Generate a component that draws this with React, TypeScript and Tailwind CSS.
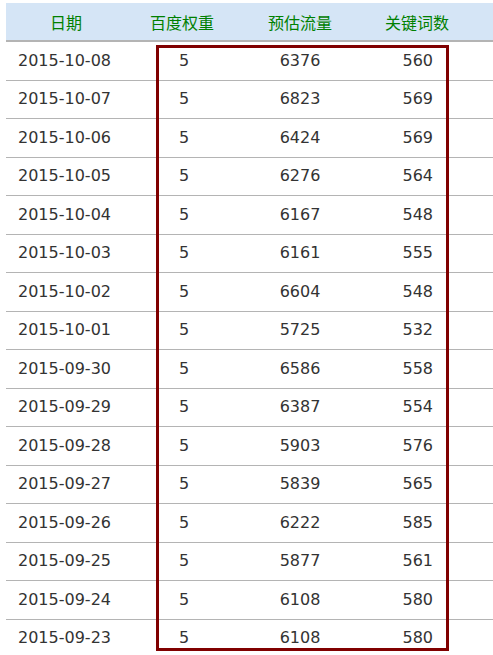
const rows = [
  ["2015-10-08", "5", "6376", "560"],
  ["2015-10-07", "5", "6823", "569"],
  ["2015-10-06", "5", "6424", "569"],
  ["2015-10-05", "5", "6276", "564"],
  ["2015-10-04", "5", "6167", "548"],
  ["2015-10-03", "5", "6161", "555"],
  ["2015-10-02", "5", "6604", "548"],
  ["2015-10-01", "5", "5725", "532"],
  ["2015-09-30", "5", "6586", "558"],
  ["2015-09-29", "5", "6387", "554"],
  ["2015-09-28", "5", "5903", "576"],
  ["2015-09-27", "5", "5839", "565"],
  ["2015-09-26", "5", "6222", "585"],
  ["2015-09-25", "5", "5877", "561"],
  ["2015-09-24", "5", "6108", "580"],
  ["2015-09-23", "5", "6108", "580"],
];

export default function App() {
  return (
    <div className="relative w-[493px] h-[655px] overflow-hidden bg-white pt-[3px] pl-[6px]">
      {/* header */}
      <div
        className="flex h-[39px] items-center bg-[#d5e5f6] border-b-2 border-[#b4b4b4] text-[16px] text-[#008000]"
        style={{ fontFamily: '"Noto Sans CJK SC", sans-serif' }}
      >
        <div className="w-[120px] text-center">日期</div>
        <div className="w-[112px] text-center">百度权重</div>
        <div className="w-[124px] text-center">预估流量</div>
        <div className="w-[110px] text-center">关键词数</div>
      </div>

      {/* rows */}
      <div className="text-[16px] text-[#333333]" style={{ fontFamily: '"DejaVu Sans", Verdana, sans-serif' }}>
        {rows.map((r) => (
          <div key={r[0]} className="flex h-[38.5px] items-center border-b border-[#b4b4b4]">
            <div className="w-[120px] pl-[12px]">{r[0]}</div>
            <div className="w-[112px] pl-[53px]">{r[1]}</div>
            <div className="w-[124px] text-center">{r[2]}</div>
            <div className="w-[110px] text-right pr-[39px]">{r[3]}</div>
          </div>
        ))}
      </div>

      {/* highlight box */}
      <div className="absolute left-[156px] top-[45px] w-[293px] h-[606px] border-[3px] border-[#800000]" />
    </div>
  );
}
